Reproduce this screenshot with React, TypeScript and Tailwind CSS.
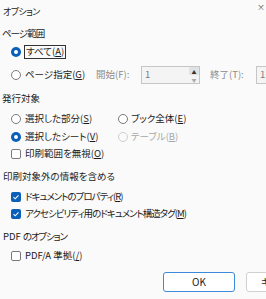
import React from 'react'

function Radio({ checked, disabled }: { checked?: boolean; disabled?: boolean }) {
  if (checked) {
    return (
      <span className="flex h-[10px] w-[10px] shrink-0 items-center justify-center rounded-full bg-[#0a5fb8]">
        <span className="h-[4px] w-[4px] rounded-full bg-white" />
      </span>
    )
  }
  return (
    <span
      className={
        disabled
          ? 'h-[10px] w-[10px] shrink-0 rounded-full border border-[#cfcfcf] bg-[#fafafa]'
          : 'h-[10px] w-[10px] shrink-0 rounded-full border border-[#7a7a7a] bg-white'
      }
    />
  )
}

function Check({ checked }: { checked?: boolean }) {
  if (checked) {
    return (
      <span className="flex h-[10px] w-[10px] shrink-0 items-center justify-center rounded-[2px] bg-[#0a5fb8]">
        <svg width="8" height="8" viewBox="0 0 8 8">
          <path d="M1.5 4.2 L3.2 5.8 L6.5 2.3" fill="none" stroke="white" strokeWidth="1.1" />
        </svg>
      </span>
    )
  }
  return <span className="h-[10px] w-[10px] shrink-0 rounded-[2px] border border-[#7a7a7a] bg-white" />
}

const U = ({ children }: { children: React.ReactNode }) => (
  <span className="underline underline-offset-[1px]">{children}</span>
)

export default function App() {
  return (
    <div className="relative h-[299px] w-[266px] overflow-hidden whitespace-pre bg-[#fafafa] font-['Noto_Sans_CJK_JP','Noto_Sans',sans-serif] text-[9.5px] leading-none text-[#1b1b1b] [font-feature-settings:'palt']">
      <span className="absolute right-[1px] top-[3px] text-[8px] text-[#555]">×</span>

      <div className="flex flex-col pt-[3px]">
        <div className="flex h-[16px] items-center pl-[3px] text-[9px] tracking-[-0.6px]">オプション</div>

        <div className="mt-[7px] flex h-[16px] items-center pl-[2px] tracking-[-1px]">ページ範囲</div>

        <div className="mt-[2px] flex h-[16px] items-center gap-[3px] pl-[11px]">
          <Radio checked />
          <span className="flex h-[14px] items-center border border-[#333] px-[1px]">
            すべて(<U>A</U>)
          </span>
        </div>

        <div className="mt-[6px] flex h-[18px] items-center pl-[11px]">
          <Radio />
          <span className="ml-[4px] w-[71px] shrink-0">
            ページ指定(<U>G</U>)
          </span>
          <span className="w-[45px] shrink-0 text-[#8a8a8a]">開始(F):</span>
          <div className="flex h-[18px] w-[59px] shrink-0 items-stretch border border-[#c6c6c6] bg-[#f4f4f4]">
            <span className="flex flex-1 items-center pl-[3px] text-[#7a7a7a]">1</span>
            <div className="flex w-[10px] flex-col">
              <span className="flex flex-1 items-center justify-center bg-[#e2e2e2] text-[5px] text-[#333]">▲</span>
              <span className="flex flex-1 items-center justify-center text-[5px] text-[#aaa]">▼</span>
            </div>
          </div>
          <span className="ml-[10px] w-[46px] shrink-0 text-[#8a8a8a]">終了(T):</span>
          <div className="flex h-[18px] w-[40px] shrink-0 items-center border border-[#c6c6c6] bg-[#f4f4f4] pl-[3px] text-[#7a7a7a]">
            1
          </div>
        </div>

        <div className="mt-[7px] flex h-[16px] items-center pl-[2px]">発行対象</div>

        <div className="mt-[4px] flex h-[16px] items-center pl-[11px]">
          <div className="flex w-[107px] shrink-0 items-center gap-[4px]">
            <Radio />
            <span>
              選択した部分(<U>S</U>)
            </span>
          </div>
          <div className="flex items-center gap-[3px]">
            <Radio />
            <span>
              ブック全体(<U>E</U>)
            </span>
          </div>
        </div>

        <div className="mt-[2px] flex h-[16px] items-center pl-[11px]">
          <div className="flex w-[107px] shrink-0 items-center gap-[4px]">
            <Radio checked />
            <span>
              選択したシート(<U>V</U>)
            </span>
          </div>
          <div className="flex items-center gap-[3px] text-[#a8a8a8]">
            <Radio disabled />
            <span>
              テーブル(<U>B</U>)
            </span>
          </div>
        </div>

        <div className="mt-[1px] flex h-[16px] items-center gap-[4px] pl-[11px]">
          <Check />
          <span>
            印刷範囲を無視(<U>O</U>)
          </span>
        </div>

        <div className="mt-[7px] flex h-[16px] items-center pl-[3px]">印刷対象外の情報を含める</div>

        <div className="mt-[4px] flex h-[16px] items-center gap-[4px] pl-[11px]">
          <Check checked />
          <span className="tracking-[-1px]">
            ドキュメントのプロパティ(<U>R</U>)
          </span>
        </div>

        <div className="mt-[1px] flex h-[16px] items-center gap-[4px] pl-[11px]">
          <Check checked />
          <span className="tracking-[-1px]">
            アクセシビリティ用のドキュメント構造タグ(<U>M</U>)
          </span>
        </div>

        <div className="mt-[7px] flex h-[16px] items-center pl-[3px]">
          <span>PDF </span>
          <span className="tracking-[-1.2px]">のオプション</span>
        </div>

        <div className="mt-[3px] flex h-[16px] items-center gap-[4px] pl-[11px]">
          <Check />
          <span>
            PDF/A 準拠(<U>/</U>)
          </span>
        </div>

        <div className="mt-[8px] flex h-[20px] pl-[163px]">
          <button className="flex h-[20px] w-[72px] shrink-0 items-center justify-center rounded-[3px] border-[1.5px] border-[#3c8ad8] bg-white text-[10px] text-[#1b1b1b]">
            OK
          </button>
          <button className="ml-[11px] flex h-[20px] w-[72px] shrink-0 items-center justify-start rounded-[3px] border border-[#d0d0d0] bg-white pl-[14px] text-[10px] text-[#1b1b1b]">
            キャンセル
          </button>
        </div>
      </div>
    </div>
  )
}
